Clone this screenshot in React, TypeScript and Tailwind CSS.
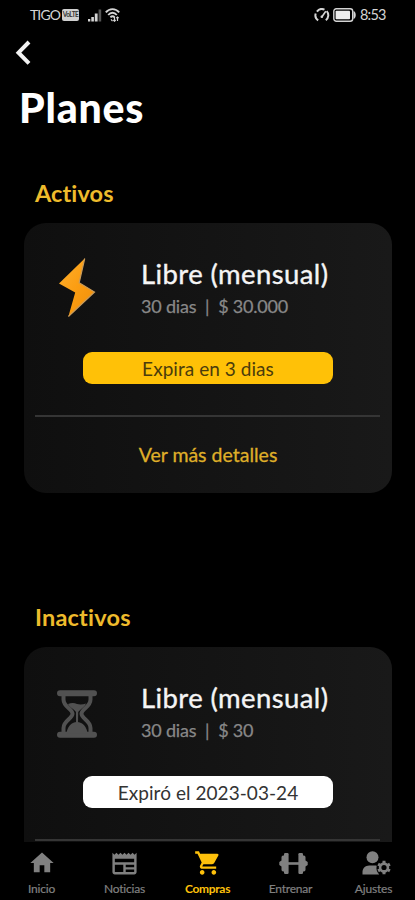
import type { ReactNode } from "react";
import { MdHome, MdNewspaper, MdShoppingCart } from "react-icons/md";

function StatusBar() {
  return (
    <div className="flex h-[30px] shrink-0 items-center justify-between pl-[30px] pr-[29px] text-[#d4d4d4]">
      <div className="flex items-center">
        <span className="w-[32px] whitespace-nowrap text-[14px] leading-none tracking-[-0.9px]">TIGO</span>
        <span className="flex h-[12px] w-[17px] items-center justify-center rounded-[2px] bg-[#cfcfcf] text-[6.5px] font-bold leading-none tracking-[-0.5px] text-[#333]">
          VoLTE
        </span>
        <svg className="ml-[9px]" width="14" height="13" viewBox="0 0 14 13" fill="currentColor">
          <rect x="0" y="10" width="2.3" height="2.5" />
          <rect x="3.3" y="8" width="2.6" height="4.5" />
          <rect x="6.8" y="4.5" width="2.8" height="8" />
          <rect x="10.6" y="0.5" width="2.6" height="12" opacity="0.4" />
        </svg>
        <svg className="ml-[3px]" width="15" height="14" viewBox="0 0 15 14" fill="none" stroke="currentColor" strokeWidth="1.9">
          <path d="M.8 4.3C4.5 0 10.5 0 14.2 4.3M3.2 7c2.5-3 6.1-3 8.6 0M5.4 9.3c1.3-1.4 2.9-1.4 4.2 0" />
          <path d="M6 11.3l1.5 1.8M9.5 9v4M12.5 9v4M8.3 12l1.2 1.2 1.2-1.2M11.3 10.2l1.2-1.2 1.2 1.2" strokeWidth="1.2" />
        </svg>
      </div>
      <div className="flex items-center">
        <svg width="16" height="14" viewBox="0 0 16 14" fill="none" stroke="currentColor" strokeWidth="2">
          <path d="M4.2 12.3A6 6 0 0 1 1.7 5.500M2.900 3.600A6.200 6.200 0 0 1 10.500 1.700M12.700 3.200a6.200 6.200 0 0 1-.9 9.100" />
          <path d="M7.600 9.200l4.200-6" strokeWidth="1.6" />
          <circle cx="7.8" cy="8.8" r="1.3" fill="currentColor" stroke="none" />
        </svg>
        <svg className="ml-[3px]" width="24" height="14" viewBox="0 0 24 14" fill="none">
          <rect x="0.8" y="0.8" width="18.9" height="12.4" rx="2.5" stroke="currentColor" strokeWidth="1.4" />
          <rect x="2.6" y="2.7" width="14.4" height="8.6" rx="0.8" fill="#eee" />
          <path d="M20.500 3c3 .6 3 7.400 0 8z" fill="currentColor" />
        </svg>
        <span className="ml-[3px] w-[26px] whitespace-nowrap text-[14.5px] leading-none tracking-[-0.8px]">8:53</span>
      </div>
    </div>
  );
}

function BoltIcon() {
  return (
    <svg width="38" height="62" viewBox="0 0 38 62">
      <defs>
        <linearGradient id="bolt" x1="0" y1="0" x2="1" y2="1">
          <stop offset="0" stopColor="#ffb02e" />
          <stop offset="0.5" stopColor="#fb9d12" />
          <stop offset="1" stopColor="#ef8d08" />
        </linearGradient>
      </defs>
      <path d="M26.700 1.500L1 26.500l16.200 9-6.800 24L36.500 35 21.200 25.700z" fill="url(#bolt)" />
      <path d="M26.700 1.500l-5.500 24.200L36.500 35 10.400 59.500" fill="none" stroke="#c99b5a" strokeWidth="1.2" />
    </svg>
  );
}

function HourglassIcon() {
  return (
    <svg className="mt-[3px]" width="42" height="50" viewBox="0 0 42 50" fill="none">
      <path
        d="M7.500 6v4.500c0 7.500 9 9.500 9 14.300s-9 6.700-9 14.200V44M34.500 6v4.500c0 7.500-9 9.500-9 14.300s9 6.700 9 14.200V44"
        stroke="#515151"
        strokeWidth="4"
      />
      <path d="M4 4.200h34M4 45.800h34" stroke="#515151" strokeWidth="6" strokeLinecap="round" />
      <path d="M12 15q5-2 9 0 4.500 1 9-.5c-1.200 3.500-5.500 5.500-7.800 8.500l-.2 11h-2V23c-2-3-6.500-4.500-8-8z" fill="#515151" />
      <path d="M10.500 44.500c.5-6 4.500-11.500 10.500-11.500s10 5.500 10.500 11.500z" fill="#515151" />
    </svg>
  );
}

function DumbbellIcon() {
  return (
    <svg className="ml-[5px]" width="29" height="23" viewBox="0 0 29 23" fill="currentColor">
      <rect x="5" y="1" width="4.6" height="21" rx="1.2" />
      <rect x="19.4" y="1" width="4.6" height="21" rx="1.2" />
      <path d="M5.500 3.500v16H4.200A1.700 1.700 0 0 1 2.500 17.800v-3.300L.3 13V10l2.200-1.500V5.200a1.700 1.700 0 0 1 1.700-1.700zM23.500 3.500v16h1.300a1.700 1.700 0 0 0 1.700-1.700v-3.300l2.200-1.500v-3l-2.200-1.500V5.200a1.700 1.700 0 0 0-1.700-1.700z" />
      <rect x="9" y="10.2" width="11" height="2.6" />
    </svg>
  );
}

function UserGearIcon() {
  return (
    <svg className="ml-[5px]" width="29" height="25" viewBox="0 0 29 25" fill="currentColor">
      <circle cx="10.5" cy="6.3" r="6" />
      <path d="M.5 23.500v-2.500C.5 17.300 3.500 14.500 7.200 14.500h5.800c.6 0 1.200.1 1.700.3-.8 3.200.2 6.500 2.500 8.700z" />
      <g transform="translate(22 16.5)">
        <circle r="3.9" fill="none" stroke="currentColor" strokeWidth="2.6" />
        <path
          d="M0-6.800v2.700M0 4.100v2.700M-5.900-3.400l2.400 1.400M3.500 2l2.400 1.400M-5.900 3.400l2.400-1.400M3.500-2l2.400-1.400"
          stroke="currentColor"
          strokeWidth="3"
        />
      </g>
    </svg>
  );
}

type PlanProps = {
  icon: ReactNode;
  price: string;
  badge: string;
  badgeClass: string;
  action?: string;
};

function PlanCard({ icon, price, badge, badgeClass, action }: PlanProps) {
  return (
    <div className="ml-[24px] flex h-[270px] w-[368px] shrink-0 flex-col rounded-[22px] bg-gradient-to-r from-[#0f0f0f] to-[#191919] px-[11px]">
      <div className="flex h-[128px] shrink-0 pt-[34px]">
        <div className="flex h-[62px] w-[84px] items-center justify-center">{icon}</div>
        <div className="ml-[22px] flex flex-col whitespace-nowrap">
          <h3 className="text-[27.5px] leading-[34px] tracking-[0.4px] text-[#f5f5f5] [-webkit-text-stroke:0.35px_#f5f5f5]">Libre (mensual)</h3>
          <p className="text-[18px] leading-[30px] tracking-[-0.2px] text-[#888] [-webkit-text-stroke:0.25px_#888]">30 dias&nbsp; |&nbsp; {price}</p>
        </div>
      </div>
      <div className={`ml-[48px] mt-px flex h-[32px] w-[250px] shrink-0 items-center justify-center whitespace-nowrap rounded-[9px] pt-[2px] text-[19px] tracking-[0.05px] ${badgeClass}`}>
        {badge}
      </div>
      <div className="mr-px mt-[31px] h-[2px] shrink-0 bg-[#353535]" />
      {action && (
        <button className="flex flex-1 items-center justify-center text-[19.5px] text-[#dfae29] [-webkit-text-stroke:0.3px_#dfae29]">
          {action}
        </button>
      )}
    </div>
  );
}

function NavItem({ icon, label, active }: { icon: ReactNode; label: string; active?: boolean }) {
  return (
    <div className={`flex w-[83px] flex-col items-center ${active ? "text-[#fec10b]" : "text-[#808080]"}`}>
      <div className="flex h-[28px] items-center justify-center">{icon}</div>
      <span
        className={`mt-[4px] whitespace-nowrap leading-[16px] ${active ? "text-[12px] font-bold tracking-[-0.3px]" : "text-[12px] tracking-[-0.2px] [-webkit-text-stroke:0.2px_#808080]"}`}
      >
        {label}
      </span>
    </div>
  );
}

export default function App() {
  return (
    <div className="flex h-[900px] w-[415px] flex-col overflow-hidden bg-black font-['Lato','Noto_Sans',sans-serif] [font-variant-ligatures:none]">
      <StatusBar />
      <main className="flex min-h-0 flex-1 flex-col overflow-hidden">
        <svg className="ml-[14px] mt-[10px] shrink-0" width="18" height="26" viewBox="0 0 18 26" fill="none" stroke="#f2f2f2" strokeWidth="4">
          <path d="M15 2L4.500 12.700l10.500 10.700" />
        </svg>
        <h1 className="ml-[19px] mt-[18px] h-[48px] shrink-0 text-[41px] font-black leading-[48px] tracking-[0.8px] text-white">Planes</h1>
        <h2 className="ml-[35px] mt-[46px] h-[30px] shrink-0 text-[23.5px] font-bold leading-[30px] tracking-[0.1px] text-[#eebb2c]">Activos</h2>
        <div className="mt-[15px] flex shrink-0">
          <PlanCard
            icon={<BoltIcon />}
            price="$ 30.000"
            badge="Expira en 3 dias"
            badgeClass="bg-[#ffc107] text-[#4b3c0c]"
            action="Ver más detalles"
          />
        </div>
        <h2 className="ml-[35px] mt-[109px] h-[30px] shrink-0 text-[23.5px] font-bold leading-[30px] tracking-[0.2px] text-[#eebb2c]">Inactivos</h2>
        <div className="mt-[15px] flex shrink-0">
          <PlanCard icon={<HourglassIcon />} price="$ 30" badge="Expiró el 2023-03-24" badgeClass="bg-white text-[#333]" />
        </div>
      </main>
      <nav className="flex h-[58px] shrink-0 bg-black pt-[7px]">
        <NavItem icon={<MdHome size={28} />} label="Inicio" />
        <NavItem icon={<MdNewspaper size={29} />} label="Noticias" />
        <NavItem icon={<MdShoppingCart size={28} />} label="Compras" active />
        <NavItem icon={<DumbbellIcon />} label="Entrenar" />
        <NavItem icon={<UserGearIcon />} label="Ajustes" />
      </nav>
    </div>
  );
}
